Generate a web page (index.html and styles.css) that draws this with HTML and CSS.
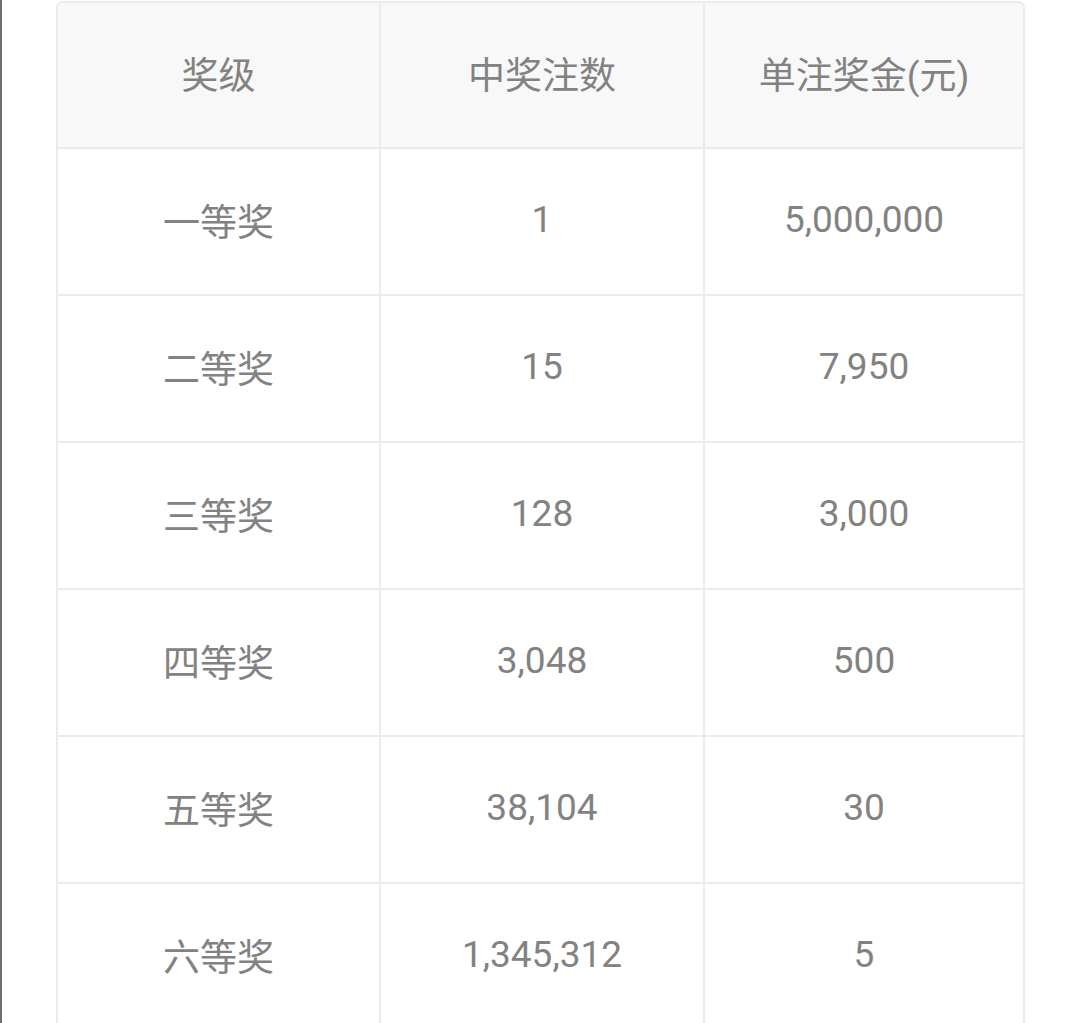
FILE: index.html
```html
<!DOCTYPE html>
<html lang="zh-CN">
<head>
<meta charset="utf-8">
<title>开奖详情</title>
<link rel="stylesheet" href="styles.css">
</head>
<body>
<div class="page">
  <div class="prize-table">
    <div class="row head">
      <div class="cell">奖级</div>
      <div class="cell">中奖注数</div>
      <div class="cell">单注奖金(元)</div>
    </div>
    <div class="row">
      <div class="cell">一等奖</div>
      <div class="cell">1</div>
      <div class="cell">5,000,000</div>
    </div>
    <div class="row">
      <div class="cell">二等奖</div>
      <div class="cell">15</div>
      <div class="cell">7,950</div>
    </div>
    <div class="row">
      <div class="cell">三等奖</div>
      <div class="cell">128</div>
      <div class="cell">3,000</div>
    </div>
    <div class="row">
      <div class="cell">四等奖</div>
      <div class="cell">3,048</div>
      <div class="cell">500</div>
    </div>
    <div class="row">
      <div class="cell">五等奖</div>
      <div class="cell">38,104</div>
      <div class="cell">30</div>
    </div>
    <div class="row">
      <div class="cell">六等奖</div>
      <div class="cell">1,345,312</div>
      <div class="cell">5</div>
    </div>
  </div>
</div>
</body>
</html>
```

FILE: styles.css
```css
html, body {
  margin: 0;
  padding: 0;
  background: #ffffff;
  height: 100%;
  overflow: hidden;
}

.page {
  min-height: 100%;
  box-sizing: border-box;
  border-left: 2px solid #6e6e6e;
  padding: 1px 0 0 54px;
  font-family: Roboto, "Noto Sans CJK SC", sans-serif;
  font-size: 37px;
  color: #828282;
}

.prize-table {
  width: 969px;
  box-sizing: border-box;
  border: 2px solid #ebebeb;
  border-radius: 7px;
  overflow: hidden;
  background: #ffffff;
}

.row {
  display: grid;
  grid-template-columns: 323px 324px 1fr;
  height: 147px;
  box-sizing: border-box;
  border-bottom: 2px solid #ebebeb;
}

.row.head {
  height: 146px;
  background: #f8f8f8;
}

.cell {
  display: flex;
  align-items: center;
  justify-content: center;
  padding-bottom: 4px;
  border-right: 2px solid #ebebeb;
  white-space: nowrap;
}

.cell:last-child {
  border-right: none;
}
```
